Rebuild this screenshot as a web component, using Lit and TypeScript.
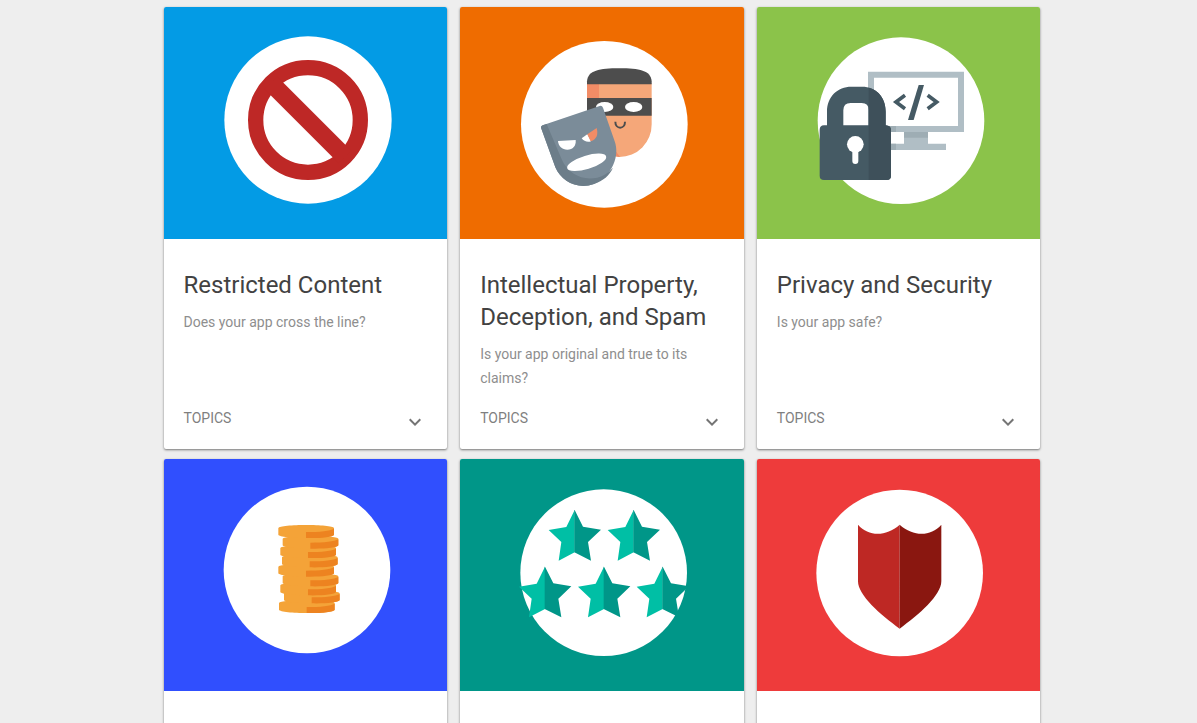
import { LitElement, html, svg, css, nothing, type SVGTemplateResult } from "lit";
import { customElement, property } from "lit/decorators.js";

interface Policy {
  tone: string;
  view: string;
  art: SVGTemplateResult;
  title?: string;
  text?: string;
}

const prohibited = svg`
  <circle cx="456" cy="360" r="251" fill="#fff"/>
  <circle cx="456" cy="360" r="157" fill="none" stroke="#be2826" stroke-width="46"/>
  <path d="M345 249L567 471" stroke="#be2826" stroke-width="54"/>`;

const masks = svg`
  <circle cx="283" cy="283" r="250" fill="#fff"/>
  <path d="M231 160H425V283A97 97 0 0 1 328 381A97 97 0 0 1 231 283Z" fill="#f5a779"/>
  <path d="M231 160H267V250H231Z" fill="#f28c66"/>
  <path d="M300 340L330 381C322 381 316 379 308 372Z" fill="#f28c66"/>
  <path d="M231 163V154C234 121 268 115 328 115S422 121 425 154V163Z" fill="#4d4d4d"/>
  <path d="M231 204H425V257H231Z" fill="#4d4d4d"/>
  <ellipse cx="284" cy="231" rx="26" ry="15" fill="#fff"/>
  <ellipse cx="371" cy="231" rx="26" ry="15" fill="#fff"/>
  <path d="M316 275C316 299 345 299 345 275" fill="none" stroke="#4d4d4d" stroke-width="6"/>
  <path d="M98 286L269 228Q276 226 279 233L314 334C330 377 307 439 252 462C204 480 154 455 136 412L93 293Q92 288 98 286Z" fill="#7b8c99"/>
  <path d="M98 286L110 282L155 388C178 441 236 460 284 434Q298 426 309 413C299 436 279 453 252 462C204 480 154 455 136 412L93 293Q92 288 98 286Z" fill="#6c7d89"/>
  <path d="M144 333L197 330C199 348 188 359 172 359C156 359 145 348 144 333Z" fill="#fff"/>
  <path d="M215 325L232 313L243 334C233 338 221 334 215 325Z" fill="#fff"/>
  <path d="M232 313L260 294C265 311 261 329 242 334Z" fill="#f28c66"/>
  <ellipse cx="230" cy="397" rx="61" ry="20" transform="rotate(-17 230 397)" fill="#fff"/>`;

const security = svg`
  <circle cx="288" cy="272" r="250" fill="#fff"/>
  <path d="M189 125H477V306H189ZM207 143V288H459V143Z" fill="#b0bec5" fill-rule="evenodd"/>
  <path d="M297 306H369V341H423V360H240V341H297Z" fill="#b0bec5"/>
  <path d="M297 306H369V323H297ZM250 288H273V306H250ZM250 341H273V360H250Z" fill="#9eadb4"/>
  <path d="M300 196L273 216L300 236M368 196L395 216L368 236" fill="none" stroke="#455a64" stroke-width="11"/>
  <path d="M341 165H357L326 270H309Z" fill="#455a64"/>
  <path d="M66 286V245C66 200 98 170 139 170H171C213 170 242 201 242 245V286Q258 287 258 300V437Q258 450 245 450H57Q44 450 44 437V300Q44 286 57 286ZM115 286H191V240Q191 219 170 219H137Q115 219 115 241Z" fill="#455a64" fill-rule="evenodd"/>
  <path d="M191 173C222 180 242 208 242 245V286Q258 287 258 300V437Q258 450 245 450H191Z" fill="#3e505a"/>
  <circle cx="151" cy="343" r="25" fill="#fff"/>
  <path d="M151 350V393" stroke="#fff" stroke-width="18" stroke-linecap="round"/>`;

/* One coin per entry: left edge and top of its face, drawn from the bottom up. */
const stack: [number, number][] = [
  [192, 384], [207, 355], [196, 331], [203, 304], [190, 275],
  [201, 247], [196, 219], [203, 191], [190, 159],
];

const coins = svg`
  <circle cx="276" cy="285" r="250" fill="#fff"/>
  ${stack.map(([x, y]) => svg`
    <path d=${`M${x} ${y}C${x + 4} ${y - 12} ${x + 163} ${y - 12} ${x + 167} ${y}V${y + 20}C${x + 163} ${y + 33} ${x + 4} ${y + 33} ${x} ${y + 20}Z`} fill="#f4a338"/>
    <path d=${`M${x + 83} ${y + 12}C${x + 125} ${y + 12} ${x + 155} ${y + 9} ${x + 167} ${y + 2}V${y + 20}C${x + 166} ${y + 28} ${x + 120} ${y + 31} ${x + 83} ${y + 30}Z`} fill="#ed8320"/>`)}`;

/* Tip of each star. */
const tips: [number, number][] = [[194, 90], [371, 90], [105, 260], [282, 260], [458, 260]];

const stars = svg`
  <circle cx="281" cy="278" r="250" fill="#fff"/>
  ${tips.map(([x, y]) => svg`
    <g transform=${`translate(${x} ${y})`}>
      <path d="M0 0L-25 51L-78 60L-40 96L-48 152L0 127Z" fill="#00bfa5"/>
      <path d="M-1 0L0 0L25 50L79 59L40 96L49 152L-1 127Z" fill="#009688"/>
    </g>`)}`;

const shield = svg`
  <circle cx="284" cy="279" r="250" fill="#fff"/>
  <path d="M159 134C191 170 242 171 284 134V446C226 404 159 346 159 304Z" fill="#be2824"/>
  <path d="M284 134C326 171 377 170 409 134V304C409 346 342 404 284 446Z" fill="#8a1710"/>`;

const policies: Policy[] = [
  { tone: "blue", view: "24 21 851 696", art: prohibited, title: "Restricted Content", text: "Does your app cross the line?" },
  { tone: "orange", view: "-150 -69 851 696", art: masks, title: "Intellectual Property, Deception, and Spam", text: "Is your app original and true to its claims?" },
  { tone: "green", view: "-144 -69 851 696", art: security, title: "Privacy and Security", text: "Is your app safe?" },
  { tone: "indigo", view: "-153 -48 851 696", art: coins },
  { tone: "teal", view: "-150 -63 851 696", art: stars },
  { tone: "red", view: "-144 -63 851 696", art: shield },
];

@customElement("policy-card")
export class PolicyCard extends LitElement {
  @property({ attribute: false }) policy!: Policy;

  static styles = css`
    :host {
      display: flex;
      flex-direction: column;
      overflow: hidden;
      border-radius: 2px;
      background: #fff;
      box-shadow: 0 1px 3px rgba(0, 0, 0, 0.24), 0 1px 2px rgba(0, 0, 0, 0.32);
    }
    .art { display: block; width: 100%; height: auto; aspect-ratio: 851 / 696; }
    .blue { background: #039be5; }
    .orange { background: #ef6c00; }
    .green { background: #8bc34a; }
    .indigo { background: #304ffe; }
    .teal { background: #009688; }
    .red { background: #ee3b3b; }
    .body {
      display: flex;
      flex: 1;
      flex-direction: column;
      box-sizing: border-box;
      min-height: 210px;
      padding: 30px 20px 15px;
    }
    .title { margin: 0; font-size: 24px; font-weight: 400; line-height: 32px; color: #424242; }
    .text { margin: 9px 0 0; font-size: 14px; line-height: 24px; color: #8e8e8e; }
    .topics {
      display: flex;
      align-items: flex-start;
      justify-content: space-between;
      width: 100%;
      margin-top: auto;
      padding: 0;
      border: 0;
      background: none;
      font: 14px/24px Roboto, sans-serif;
      color: #7f7f7f;
      cursor: pointer;
    }
    .chevron { width: 24px; height: 24px; margin-top: 4px; fill: #757575; }
  `;

  render() {
    const { tone, view, art, title, text } = this.policy;
    return html`
      <svg class="art ${tone}" viewBox=${view} aria-hidden="true">${art}</svg>
      <div class="body">
        ${title
          ? html`
              <h2 class="title">${title}</h2>
              <p class="text">${text}</p>
              <button class="topics" type="button" aria-expanded="false">
                TOPICS
                <svg class="chevron" viewBox="0 0 24 24" aria-hidden="true">
                  <path d="M16.59 8.59L12 13.17 7.41 8.59 6 10l6 6 6-6z" />
                </svg>
              </button>
            `
          : nothing}
      </div>
    `;
  }
}

@customElement("app-root")
export class AppRoot extends LitElement {
  static styles = css`
    :host {
      display: block;
      min-height: 100vh;
      background: #eee;
      font-family: Roboto, sans-serif;
    }
    .grid {
      display: grid;
      grid-template-columns: repeat(auto-fit, minmax(240px, 1fr));
      gap: 10px 13px;
      box-sizing: border-box;
      max-width: 884px;
      margin: 0 auto;
      padding: 7px 0 10px 7px;
    }
  `;

  render() {
    return html`
      <main class="grid">
        ${policies.map((policy) => html`<policy-card .policy=${policy}></policy-card>`)}
      </main>
    `;
  }
}
